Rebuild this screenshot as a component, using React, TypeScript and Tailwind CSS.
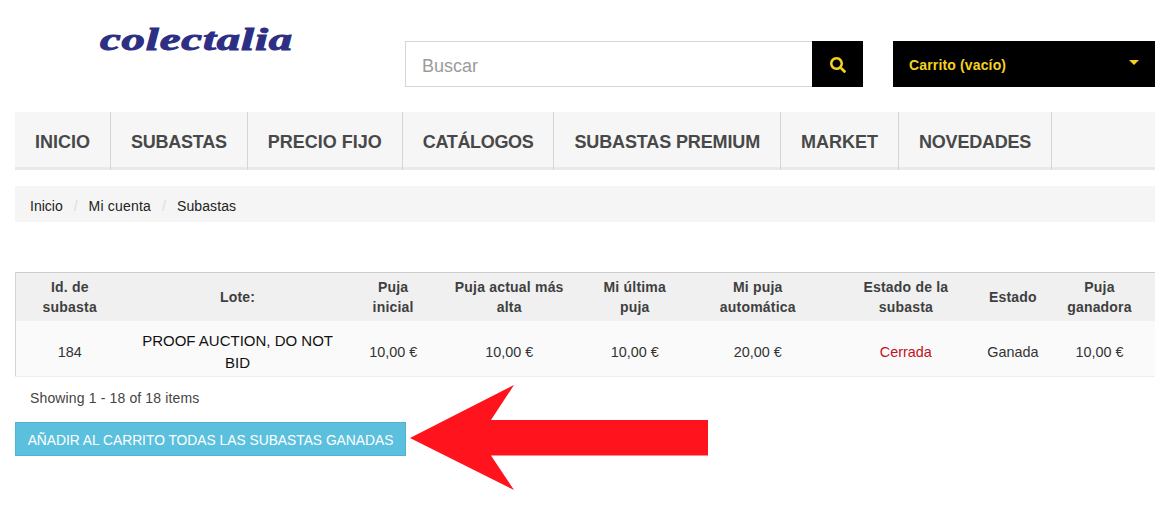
import React from 'react';
import { FaSearch } from 'react-icons/fa';

const navItems = [
  { label: 'INICIO', className: '' },
  { label: 'SUBASTAS', className: 'tracking-[-0.25px]' },
  { label: 'PRECIO FIJO', className: '' },
  { label: 'CATÁLOGOS', className: 'tracking-[-0.33px]' },
  { label: 'SUBASTAS PREMIUM', className: 'tracking-[-0.13px]' },
  { label: 'MARKET', className: '' },
  { label: 'NOVEDADES', className: 'tracking-[-0.22px]' },
];

const columns = [
  { head: ['Id. de', 'subasta'], width: 'w-[108px]' },
  { head: ['Lote:'], width: 'w-[228px]' },
  { head: ['Puja', 'inicial'], width: 'w-[83px]' },
  { head: ['Puja actual más', 'alta'], width: 'w-[149px]' },
  { head: ['Mi última', 'puja'], width: 'w-[102px]' },
  { head: ['Mi puja', 'automática'], width: 'w-[144px]' },
  { head: ['Estado de la', 'subasta'], width: 'w-[152px]' },
  { head: ['Estado'], width: 'w-[62px]' },
  { head: ['Puja', 'ganadora'], width: 'w-[111px]' },
];

export default function App() {
  return (
    <div className="relative h-[505px] w-[1170px] overflow-hidden bg-white px-[15px] font-['Liberation_Sans',Arial,sans-serif] text-[14px] text-[#333]">
      {/* Header */}
      <div className="flex h-[112px] items-start">
        <div className="w-[390px] pl-[85px] pt-[18px]">
          <span className="inline-block origin-left scale-x-[1.46] font-['Liberation_Serif',serif] text-[32px] font-bold italic leading-[42px] tracking-[0.6px] text-[#2d2f85] [-webkit-text-stroke:1px_#2d2f85]">
            colectalia
          </span>
        </div>
        <div className="mt-[41px] flex h-[46px] w-[458px] border border-[#d6d4d4]">
          <div className="flex-1 pl-4 pt-px text-[18px] leading-[46px] text-[#9c9b9b]">Buscar</div>
          <div className="-my-px -mr-px flex w-[51px] items-center justify-center bg-black">
            <FaSearch className="mt-px h-4 w-4 text-[#f5d21f]" />
          </div>
        </div>
        <div className="ml-[30px] mt-[41px] flex h-[46px] w-[262px] items-center justify-between bg-black pl-4 pr-[16px]">
          <span className="pt-0.5 text-[14px] font-bold tracking-[0.15px] text-[#f5d21f]">Carrito (vacío)</span>
          <span className="mb-[3px] h-0 w-0 border-x-[5px] border-t-[5px] border-x-transparent border-t-[#f5d21f]" />
        </div>
      </div>

      {/* Nav */}
      <div className="flex h-[58px] border-b-[3px] border-[#e9e9e9] bg-[#f6f6f6]">
        {navItems.map((item) => (
          <div
            key={item.label}
            className={`-mb-[3px] border-r border-[#d6d4d4] px-5 pt-px text-[18px] font-bold leading-[59px] text-[#484848] ${item.className}`}
          >
            {item.label}
          </div>
        ))}
      </div>

      {/* Breadcrumb */}
      <div className="mt-4 flex h-9 items-center bg-[#f5f5f5] pl-[15px] pt-1 text-[14px] text-[#222]">
        <span>Inicio</span>
        <span className="px-[11px] text-[#ddd]">/</span>
        <span className="tracking-[0.2px]">Mi cuenta</span>
        <span className="px-[11px] text-[#ddd]">/</span>
        <span className="tracking-[0.1px]">Subastas</span>
      </div>

      {/* Table */}
      <table className="mt-[50px] w-[1140px] table-fixed border-collapse border-l border-[#d6d4d4]">
        <thead>
          <tr className="h-[48px] border-t border-[#ccc] bg-[#f0f0f0] text-[14px] font-bold leading-[20px] tracking-[0.2px] text-[#3f3f3f]">
            {columns.map((col) => (
              <th key={col.head[0]} className={`${col.width} p-0 text-center font-bold`}>
                {col.head.map((line) => (
                  <div key={line}>{line}</div>
                ))}
              </th>
            ))}
          </tr>
        </thead>
        <tbody>
          <tr className="h-[56px] border-b border-[#eee] bg-[#fafafa] text-center text-[14.4px] leading-[22px] text-[#333]">
            <td className="pt-2">184</td>
            <td className="pt-2 text-[15px] text-[#111]">
              PROOF AUCTION, DO NOT
              <br />
              BID
            </td>
            <td className="pt-2">10,00 €</td>
            <td className="pt-2">10,00 €</td>
            <td className="pt-2">10,00 €</td>
            <td className="pt-2">20,00 €</td>
            <td className="pt-2 text-[#c4101c]">Cerrada</td>
            <td className="pt-2">Ganada</td>
            <td className="pt-2">10,00 €</td>
          </tr>
        </tbody>
      </table>

      <div className="mt-[11px] pl-[15px] text-[14px] leading-5 tracking-[0.14px] text-[#444]">Showing 1 - 18 of 18 items</div>

      <div className="mt-[14px] h-[34px] w-[391px] border border-[#4fb3d3] bg-[#5bc0de] text-center text-[13.8px] leading-[35px] text-white">
        AÑADIR AL CARRITO TODAS LAS SUBASTAS GANADAS
      </div>

      {/* Red arrow annotation */}
      <svg className="absolute left-[405px] top-[380px]" width="310" height="115" viewBox="405 380 310 115">
        <polygon points="410,438 514,385 491,420 708,420 708,455.5 491,455.5 514,490" fill="#ff141e" />
      </svg>
    </div>
  );
}
